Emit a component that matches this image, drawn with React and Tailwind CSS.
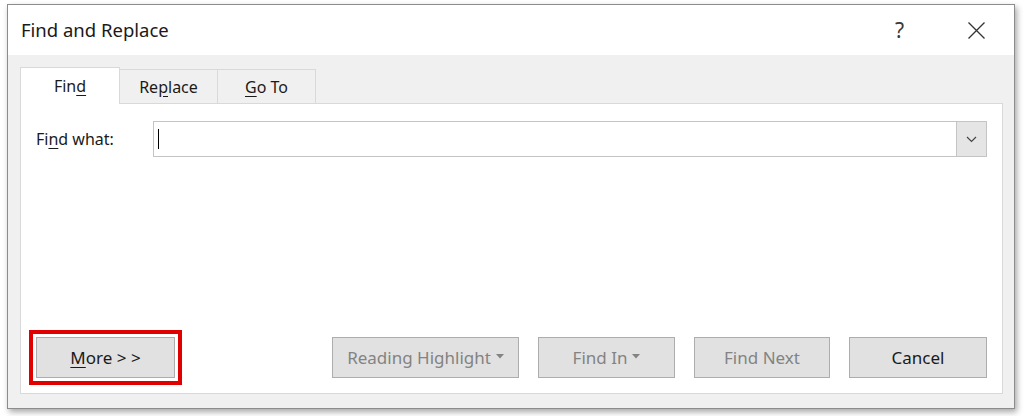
import React from 'react';

const font = { fontFamily: '"Noto Sans", "Open Sans", sans-serif' };

// little caret for the split buttons
const Caret = () => (
  <svg width="8" height="5" viewBox="0 0 8 5" className="ml-[5px] mb-[3px]">
    <path d="M0 0 L8 0 L4 4.5 Z" fill="currentColor" />
  </svg>
);

const DialogButton = ({ children, disabled, width }) => (
  <button
    type="button"
    className={`h-[41px] ${width} flex items-center justify-center bg-[#e1e1e1] border border-[#adadad] text-[17px] ${disabled ? 'text-[#838383]' : 'text-[#1a1a1a]'}`}
  >
    {children}
  </button>
);

const App = () => {
  return (
    <div className="w-[1024px] h-[416px] bg-white pt-[4px] pl-[7px]" style={font}>
      <div className="w-[1008px] h-[405px] flex flex-col border border-[#8c8c8c] shadow-[2px_3px_6px_rgba(0,0,0,0.35)]">
        {/* Title bar */}
        <div className="h-[50px] bg-white flex items-center pl-[13px] pr-[29px]">
          <span className="text-[18.5px] text-[#1a1a1a]">Find and Replace</span>
          <div className="ml-auto flex items-center gap-[64px]">
            <span className="text-[21px] text-[#3a3a3a] leading-none">?</span>
            <svg width="17" height="17" viewBox="0 0 17 17">
              <path d="M0.5 0.5 L16.5 16.5 M16.5 0.5 L0.5 16.5" stroke="#333" strokeWidth="1.3" fill="none" />
            </svg>
          </div>
        </div>

        {/* Body */}
        <div className="flex-1 bg-[#f0f0f0] pt-[12px] pl-[12px] pr-[11px] pb-[14px] flex flex-col">
          {/* Tabs */}
          <div className="flex items-end h-[37px] -mb-px relative z-10">
            <div className="w-[100px] h-[37px] bg-white border border-b-0 border-[#d9d9d9] flex items-center justify-center text-[16px] text-[#1a1a1a]">
              <span>Fin<span className="underline underline-offset-[3px]">d</span></span>
            </div>
            <div className="w-[98px] h-[35px] bg-[#f0f0f0] border border-l-0 border-[#d9d9d9] flex items-center justify-center text-[16px] text-[#1a1a1a]">
              <span>Re<span className="underline underline-offset-[3px]">p</span>lace</span>
            </div>
            <div className="w-[98px] h-[35px] bg-[#f0f0f0] border border-l-0 border-[#d9d9d9] flex items-center justify-center text-[16px] text-[#1a1a1a]">
              <span><span className="underline underline-offset-[3px]">G</span>o To</span>
            </div>
          </div>

          {/* Tab panel */}
          <div className="flex-1 bg-white border border-[#d9d9d9] pt-[17px] pl-[15px] pr-[15px] pb-[15px] flex flex-col">
            <div className="flex items-center">
              <label className="w-[117px] text-[16px] text-[#1a1a1a]">
                Fi<span className="underline underline-offset-[3px]">n</span>d what:
              </label>
              <div className="flex-1 h-[36px] border border-[#c4c4c4] flex items-center">
                <span className="ml-[4px] w-px h-[20px] bg-black" />
                <div className="ml-auto h-[34px] w-[30px] bg-[#e5e5e5] border-l border-[#c4c4c4] flex items-center justify-center">
                  <svg width="11" height="7" viewBox="0 0 11 7">
                    <path d="M1 1 L5.5 5.5 L10 1" stroke="#444" strokeWidth="1.2" fill="none" />
                  </svg>
                </div>
              </div>
            </div>

            <div className="mt-auto flex items-center">
              <div className="relative">
                <DialogButton width="w-[139px]">
                  <span>
                    <span className="underline underline-offset-[3px]">M</span>ore &gt; &gt;
                  </span>
                </DialogButton>
                {/* red highlight around the More button */}
                <span className="absolute -inset-[7px] border-[4px] border-[#e00000] pointer-events-none" />
              </div>
              <div className="ml-auto flex gap-[19px]">
                <DialogButton disabled width="w-[187px]">
                  Reading Highlight<Caret />
                </DialogButton>
                <DialogButton disabled width="w-[137px]">
                  Find In<Caret />
                </DialogButton>
                <DialogButton disabled width="w-[136px]">
                  Find Next
                </DialogButton>
                <DialogButton width="w-[138px]">
                  Cancel
                </DialogButton>
              </div>
            </div>
          </div>
        </div>
      </div>
    </div>
  );
};

export default App;
